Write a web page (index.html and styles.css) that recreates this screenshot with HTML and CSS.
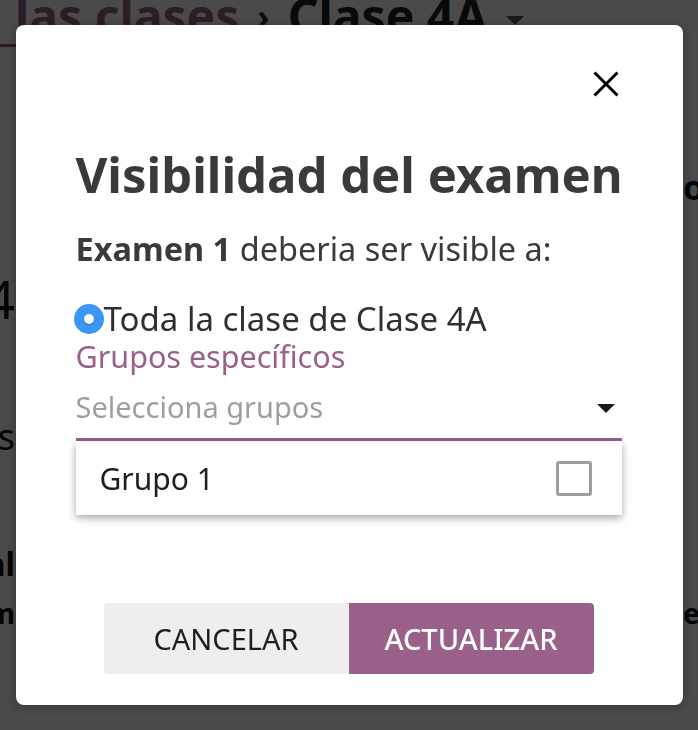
FILE: index.html
```html
<!DOCTYPE html>
<html lang="es">
<head>
<meta charset="utf-8">
<title>Visibilidad del examen</title>
<link rel="stylesheet" href="styles.css">
</head>
<body>
<div class="page">
  <header class="topbar">
    <span class="crumb">las clases</span>
    <span class="sep">›</span>
    <span class="current">Clase 4A</span>
    <span class="caret"></span>
  </header>
  <div class="tabline"></div>
  <main class="content">
    <div class="bg-row row-a"><div class="bl"></div><div></div><div class="br bold">opciones</div></div>
    <div class="bg-row row-b"><div class="bl big">Lección 4</div><div></div><div class="br"></div></div>
    <div class="bg-row row-c"><div class="bl mid">Ejercicios</div><div></div><div class="br"></div></div>
    <div class="bg-row row-d"><div class="bl bold">Total</div><div></div><div class="br"></div></div>
    <div class="bg-row row-e"><div class="bl bold">Ítem</div><div></div><div class="br bold">estado</div></div>
  </main>
</div>

<div class="overlay">
  <div class="modal" role="dialog" aria-labelledby="modal-title">
    <div class="modal-top">
      <button class="close" aria-label="Cerrar">
        <svg width="26" height="26" viewBox="0 0 26 26"><path d="M1.5 1.5 L24.5 24.5 M24.5 1.5 L1.5 24.5" stroke="#000" stroke-width="3" fill="none"/></svg>
      </button>
    </div>
    <h1 id="modal-title" class="title">Visibilidad del examen</h1>
    <p class="subtitle"><strong>Examen 1</strong> deberia ser visible a:</p>
    <label class="radio-row"><span class="radio"><span class="dot"></span></span>Toda la clase de Clase 4A</label>
    <div class="groups-label">Grupos específicos</div>
    <div class="select">
      <span class="placeholder">Selecciona grupos</span>
      <span class="arrow"></span>
    </div>
    <div class="menu">
      <div class="menu-item"><span>Grupo 1</span><span class="checkbox"></span></div>
    </div>
    <div class="actions">
      <button class="btn btn-cancel">CANCELAR</button>
      <button class="btn btn-primary">ACTUALIZAR</button>
    </div>
  </div>
</div>
</body>
</html>
```
FILE: styles.css
```css
html, body {
  margin: 0;
  padding: 0;
}
body {
  width: 698px;
  height: 730px;
  overflow: hidden;
  background: #ffffff;
  font-family: "Noto Sans", "Open Sans", sans-serif;
  color: #212121;
}
.page {
  width: 698px;
  height: 730px;
  overflow: hidden;
}
.topbar {
  display: flex;
  align-items: center;
  height: 44px;
  padding-left: 15px;
  margin-top: -6px;
  font-size: 48px;
  font-weight: 700;
  white-space: nowrap;
  line-height: 44px;
}
.crumb { color: #996189; }
.sep { margin: 0 18px; font-size: 34px; color: #333; }
.current { color: #212121; }
.caret {
  margin-left: 18px;
  margin-top: 8px;
  width: 0;
  height: 0;
  border-left: 9px solid transparent;
  border-right: 9px solid transparent;
  border-top: 9px solid #555;
}
.tabline {
  margin-top: 6px;
  width: 240px;
  height: 3px;
  background: #996189;
}
.content {
  display: flex;
  flex-direction: column;
}
.bg-row {
  display: grid;
  grid-template-columns: 15px 1fr 15px;
  white-space: nowrap;
  color: #111;
}
.bl {
  display: flex;
  justify-content: flex-end;
}
.bold { font-weight: 700; }
.row-a { margin-top: 120px; font-size: 34px; line-height: 40px; }
.row-b { margin-top: 62px; }
.row-b .big { font-size: 52px; line-height: 60px; }
.row-c { margin-top: 88px; font-size: 36px; line-height: 40px; }
.row-d { margin-top: 87px; font-size: 32px; line-height: 40px; }
.row-e { margin-top: 9px; font-size: 28px; line-height: 40px; }

.overlay {
  position: fixed;
  inset: 0;
  background: rgba(0, 0, 0, 0.71);
  display: flex;
  align-items: center;
  justify-content: center;
}
.modal {
  width: 667px;
  height: 680px;
  box-sizing: border-box;
  padding: 0 61px 31px 60px;
  background: #ffffff;
  border-radius: 8px;
  box-shadow: 0 2px 12px rgba(0, 0, 0, 0.3);
  display: flex;
  flex-direction: column;
  color: #3a3a3a;
}
.modal-top {
  display: flex;
  justify-content: flex-end;
  margin-top: 43px;
}
.close {
  width: 32px;
  height: 32px;
  padding: 0;
  border: 0;
  background: transparent;
  display: flex;
  align-items: center;
  justify-content: center;
  cursor: pointer;
}
.title {
  margin: 46px 0 0;
  font-size: 49px;
  line-height: 56px;
  font-weight: 700;
  color: #3a3a3a;
  white-space: nowrap;
}
.subtitle {
  margin: 29px 0 0;
  font-size: 32.5px;
  line-height: 36px;
  color: #3a3a3a;
  white-space: nowrap;
}
.subtitle strong { font-weight: 700; }
.radio-row {
  margin-top: 32px;
  display: flex;
  align-items: center;
  font-size: 33px;
  line-height: 40px;
  color: #2f2f2f;
  margin-left: -2px;
  white-space: nowrap;
}
.radio {
  width: 30px;
  height: 30px;
  flex: none;
  border-radius: 50%;
  background: #3b97f5;
  display: flex;
  align-items: center;
  justify-content: center;
  margin-right: 0;
}
.dot {
  width: 10px;
  height: 10px;
  border-radius: 50%;
  background: #ffffff;
  box-shadow: 0 1px 2px rgba(0, 0, 0, 0.35);
}
.groups-label {
  font-size: 30.5px;
  line-height: 34px;
  color: #996189;
  white-space: nowrap;
}
.select {
  margin-top: 14px;
  display: flex;
  align-items: center;
  justify-content: space-between;
  padding-bottom: 11px;
  border-bottom: 3px solid #996189;
}
.placeholder {
  font-size: 29px;
  line-height: 40px;
  color: #9e9e9e;
}
.arrow {
  width: 0;
  height: 0;
  margin-right: 7px;
  margin-top: 2px;
  border-left: 9px solid transparent;
  border-right: 9px solid transparent;
  border-top: 9px solid #1a1a1a;
}
.menu {
  background: #ffffff;
  box-shadow: 0 3px 8px rgba(0, 0, 0, 0.35);
}
.menu-item {
  height: 74px;
  display: flex;
  align-items: center;
  justify-content: space-between;
  padding: 0 30px 0 24px;
  font-size: 30px;
  color: #1e1e1e;
}
.checkbox {
  width: 36px;
  height: 35px;
  box-sizing: border-box;
  border: 3px solid #9e9e9e;
  border-radius: 3px;
}
.actions {
  margin-top: auto;
  display: flex;
  justify-content: center;
}
.btn {
  width: 245px;
  height: 71px;
  border: 0;
  font-family: "Noto Sans", "Open Sans", sans-serif;
  font-size: 29px;
  cursor: pointer;
}
.btn-cancel {
  background: #eeeeee;
  color: #1e1e1e;
  border-radius: 4px 0 0 4px;
}
.btn-primary {
  background: #996189;
  color: #ffffff;
  border-radius: 0 4px 4px 0;
  font-weight: 500;
}
```
